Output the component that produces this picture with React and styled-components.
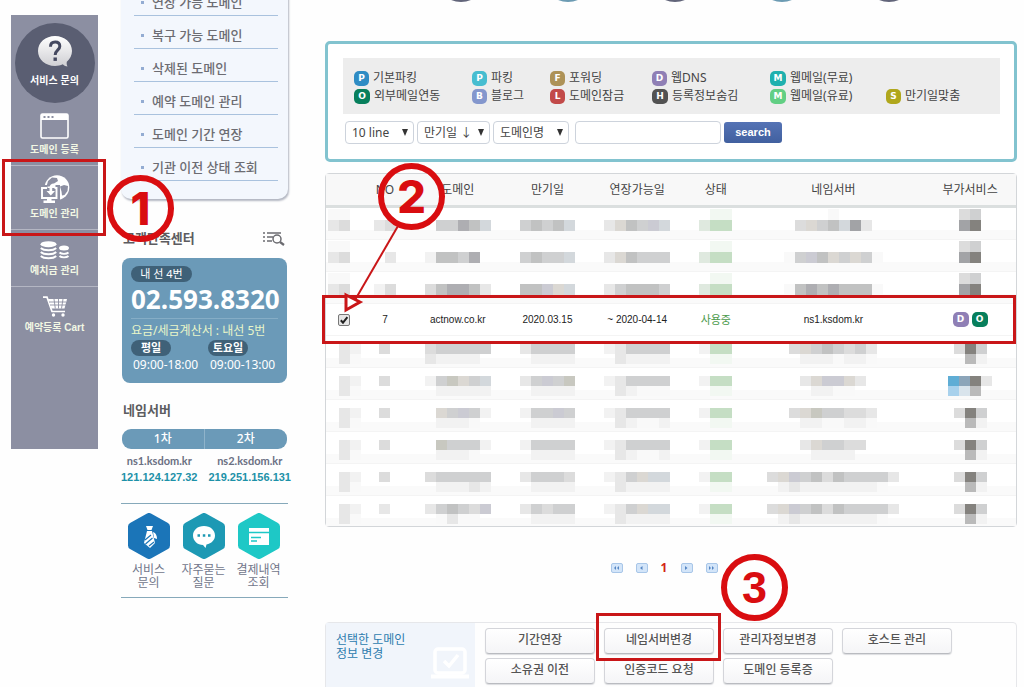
import React from "react";
import styled, { createGlobalStyle, css } from "styled-components";

const KR = `"Noto Sans", "Noto Sans CJK KR", sans-serif`;
const RED = "#d90d10";
const BLUE = "#6b9ab8";

const GlobalStyle = createGlobalStyle`
  *, *::before, *::after { box-sizing: border-box; }
  body {
    margin: 0;
    background: #fefefe;
    color: #444;
    font-family: ${KR};
    font-size: 12px;
    line-height: 16px;
  }
  a { color: inherit; text-decoration: none; }
  button, input, select { font: inherit; color: inherit; margin: 0; }
  ul { list-style: none; margin: 0; padding: 0; }
  h2, p, dl, dd { margin: 0; }
`;

const Page = styled.div`
  display: flex;
  align-items: flex-start;
  height: 100vh;
  overflow: hidden;
  padding: 0 7px 0 11px;
`;

/* ---------- quick menu rail ---------- */

const Rail = styled.nav`
  position: relative;
  z-index: 2;
  flex: none;
  width: 87px;
  min-height: 434px;
  margin: 15px 23px 0 0;
  background: #8c8fa2;
  color: #fff;
  font: 700 10px/14px "Liberation Sans", "Noto Sans CJK KR", sans-serif;
  white-space: nowrap;
`;

const RailHelp = styled.a`
  display: flex;
  flex-direction: column;
  align-items: center;
  gap: 7px;
  width: 80px;
  height: 80px;
  margin: 8px auto 0;
  padding-top: 13px;
  border-radius: 50%;
  background: #5a5e72;
`;

const RailItem = styled.a`
  position: relative;
  display: flex;
  flex-direction: column;
  align-items: center;
  gap: 4px;
  padding: ${(p) => p.$pad} 0 8px;
  color: #f2f7e4;
  border-bottom: ${(p) => (p.$last ? "0" : "1px solid #b4b6c3")};
`;

/* ---------- side column ---------- */

const Side = styled.aside`
  flex: none;
  width: 170px;
  margin: -17px 34px 0 0;
`;

const MenuPanel = styled.ul`
  width: 167px;
  padding: 0 10px 18px 13px;
  background: #f3f7fd;
  border-radius: 0 0 10px 10px;
  box-shadow: 1px 2px 2px #b3b7c2;
  font-size: 13px;
  font-weight: 500;
  color: #6c6c72;
  white-space: nowrap;
`;

const MenuItem = styled.li`
  height: 33px;
  border-bottom: 1px solid #a9c2de;
  a {
    display: flex;
    align-items: center;
    gap: 8px;
    height: 32px;
    padding: 6px 0 0 7px;
  }
  a::before {
    content: "";
    width: 3px;
    height: 3px;
    background: #93acd2;
  }
`;

const Heading = styled.h2`
  display: flex;
  justify-content: space-between;
  align-items: center;
  padding: 0 6px 0 2px;
  margin: ${(p) => p.$margin};
  font-size: 13px;
  line-height: 18px;
  color: #5c5c60;
`;

const PhoneCard = styled.section`
  width: 165px;
  height: 125px;
  margin-left: 1px;
  padding: 8px 9px;
  border-radius: 8px;
  background: ${BLUE};
  color: #fff;
  white-space: nowrap;
`;

const Pill = styled.span`
  display: inline-block;
  min-width: ${(p) => p.$w};
  height: 16px;
  border-radius: 8px;
  background: #3f6178;
  text-align: center;
  font-size: 11px;
  line-height: 15px;
  font-weight: ${(p) => (p.$bold ? 700 : 400)};
`;

const PhoneNumber = styled.p`
  margin-bottom: 2px;
  font: 700 26px/34px "Open Sans", sans-serif;
`;

const BillingLine = styled.p`
  border-top: 1px solid #85adc6;
  padding-top: 3px;
  color: #e9f6c8;
  line-height: 18px;
`;

const Hours = styled.div`
  display: grid;
  grid-template-columns: 77px auto;
  div { display: flex; flex-direction: column; align-items: flex-start; }
  time { padding-left: 2px; font-size: 12px; line-height: 18px; font-family: "Noto Sans", sans-serif; }
`;

const NsTable = styled.table`
  display: block;
  text-align: center;
  white-space: nowrap;
  thead, tbody { display: block; }
  thead tr { display: grid; grid-template-columns: 1fr 1fr; width: 165px; margin-left: 1px; }
  tbody tr { display: flex; justify-content: space-between; }
  td { padding: 0; }
`;

const NsHead = styled.th`
  height: 20px;
  padding: 0;
  background: ${BLUE};
  color: #fff;
  font-weight: 500;
  line-height: 20px;
  &:first-child { border-radius: 9px 0 0 9px; border-right: 1px solid #8fb3ca; }
  &:last-child { border-radius: 0 9px 9px 0; }
`;

const NsName = styled.div`
  margin-top: 4px;
  font: 700 11px/16px Lato, sans-serif;
  color: #6b7083;
`;

const NsIp = styled.div`
  font: 700 11px/16px "Liberation Sans", sans-serif;
  color: #1d91a8;
`;

const Shortcuts = styled.ul`
  display: grid;
  grid-template-columns: repeat(3, 55px);
  width: 167px;
  margin-top: 18px;
  padding-top: 9px;
  border-top: 1px solid #86a9ba;
  border-bottom: 1px solid #86a9ba;
  height: 95px;
  text-align: center;
  line-height: 13px;
  color: #71768a;
  a { display: flex; flex-direction: column; align-items: center; gap: 4px; white-space: nowrap; }
`;

/* ---------- main column ---------- */

const Main = styled.main`
  flex: 1;
  min-width: 0;
`;

const StepDots = styled.div`
  display: flex;
  justify-content: center;
  gap: 55px;
  height: 41px;
  padding-left: 7px;
`;

const StepDot = styled.span`
  width: 52px;
  height: 52px;
  margin-top: -50px;
  border-radius: 50%;
  background: ${(p) => (p.$alt ? "#6c9bb3" : "#62657a")};
`;

const SearchPanel = styled.form`
  border: 3px solid #82c3cf;
  border-radius: 5px;
  padding: 14px 14px 15px 15px;
  background: #fff;
`;

const Legend = styled.ul`
  display: grid;
  grid-template-columns: 118fr 78fr 102fr 118fr 116fr 114fr;
  grid-auto-rows: 18px;
  padding: 11px 0 9px 11px;
  background: #ededed;
  white-space: nowrap;
  li { display: flex; align-items: center; gap: 4px; }
`;

const Badge = styled.span`
  display: inline-flex;
  align-items: center;
  justify-content: center;
  flex: none;
  width: ${(p) => (p.$wide ? "16px" : "15px")};
  height: 15px;
  border-radius: 5px;
  background: ${(p) => p.$c};
  color: #fff;
  font: 700 9px/15px "DejaVu Sans", sans-serif;
`;

const Filters = styled.div`
  display: flex;
  align-items: center;
  gap: 3px;
  padding: 7px 0 0 2px;
`;

const fieldBox = css`
  height: 23px;
  border: 1px solid #cdd3dc;
  border-radius: 4px;
  background: #fff;
`;

const SelectWrap = styled.label`
  position: relative;
  width: ${(p) => p.$w};
  select {
    ${fieldBox}
    display: block;
    width: 100%;
    padding: 0 0 0 6px;
    appearance: none;
  }
  svg { position: absolute; right: 6px; top: 8px; pointer-events: none; }
`;

const Keyword = styled.input`
  ${fieldBox}
  width: 146px;
  margin-left: 3px;
`;

const SearchButton = styled.button`
  width: 58px;
  height: 21px;
  padding: 0 0 2px;
  border: 0;
  border-radius: 3px;
  background: linear-gradient(#5573b5, #41609f);
  color: #fff;
  font: 700 11px/18px "Liberation Sans", sans-serif;
`;

const ListWrap = styled.div`
  position: relative;
  margin-top: 11px;
  border: 1px solid #d3d6d9;
  border-radius: 4px;
  background: #fff;
`;

const DomainTable = styled.table`
  width: 100%;
  table-layout: fixed;
  border-collapse: separate;
  border-spacing: 0;
  text-align: center;
  th {
    height: 34px;
    padding: 0;
    font-weight: 400;
    background: #f8f8f8;
    border-bottom: 3px solid #dbdfdf;
  }
  td { height: 32px; padding: 0; border-bottom: 1px solid #f4f4f4; }
  tr:last-child td { height: 30px; border-bottom: 0; }
`;

const PlainCell = styled.td`
  font-family: "Liberation Sans", "Noto Sans CJK KR", sans-serif;
  font-size: ${(p) => (p.$status ? "11px" : "10px")};
  color: ${(p) => (p.$status ? "#4c9a4c" : "#222")};
  vertical-align: middle;
`;

const Services = styled.span`
  display: flex;
  justify-content: center;
  gap: 3px;
`;

const Checkbox = styled.input`
  appearance: none;
  display: block;
  width: 12px;
  height: 12px;
  margin: 1px auto 0 12px;
  border: 1px solid #777;
  border-radius: 2px;
  background: linear-gradient(#f4f4f4, #dcdcdc);
  &:checked {
    background: url("data:image/svg+xml,%3Csvg xmlns='http://www.w3.org/2000/svg' viewBox='0 0 10 10'%3E%3Cpath d='M1.8 5.2 4 7.6 8.4 2.2' fill='none' stroke='%23222' stroke-width='2'/%3E%3C/svg%3E") center / 10px 10px no-repeat, #e6e6e6;
  }
`;

const MosaicCell = styled.td`
  vertical-align: top;
  background: linear-gradient(#fff 0 72%, #fafafa 72%);
`;

const Mosaic = styled.div`
  display: flex;
  flex-direction: column;
  align-items: center;
  padding-top: ${(p) => (p.$low ? "1px" : "8px")};
`;

const MosaicLine = styled.div`
  display: flex;
`;

const Tile = styled.i`
  width: 11px;
  height: ${(p) => p.$h};
  background: ${(p) => p.$c};
`;

const Pager = styled.nav`
  display: flex;
  align-items: center;
  justify-content: center;
  gap: 13px;
  height: 20px;
  margin: 31px 14px 0 0;
  strong { width: 7px; color: #d32316; text-align: center; }
`;

const PageLink = styled.a`
  display: flex;
  align-items: center;
  justify-content: center;
  width: 12px;
  height: 10px;
  border: 1px solid #a8c6e8;
  border-radius: 2px;
  background: #d3e5f9;
`;

const ActionPanel = styled.section`
  position: relative;
  display: flex;
  margin-top: 44px;
  border: 1px solid #e6e7ea;
  border-radius: 4px;
`;

const ActionTitle = styled.div`
  display: flex;
  justify-content: space-between;
  width: 149px;
  padding: 10px 6px 8px 10px;
  background: #f1f5fb;
  color: #2d7cae;
  line-height: 14px;
  white-space: nowrap;
  svg { margin: 14px 0 0; }
`;

const ActionGrid = styled.div`
  display: grid;
  grid-template-columns: repeat(4, 110px);
  grid-auto-rows: 26px;
  gap: 4px 9px;
  padding: 5px 10px 8px;
`;

const ActionButton = styled.button`
  padding: 0 0 2px;
  border: 1px solid #d4d5da;
  border-bottom-color: #b9bbc0;
  border-radius: 4px;
  background: linear-gradient(#fff, #f5f5f7);
  box-shadow: 0 1px 1px #dcdde0;
  color: #555;
  font-weight: 500;
  white-space: nowrap;
`;

/* ---------- tutorial marks laid over the page ---------- */

const MarkBox = styled.div`
  position: absolute;
  z-index: 3;
  inset: ${(p) => p.$inset};
  width: ${(p) => p.$w || "auto"};
  height: ${(p) => p.$h || "auto"};
  border: 3px solid #c91618;
  pointer-events: none;
`;

const Ring = styled.div`
  position: absolute;
  z-index: 4;
  left: ${(p) => p.$x};
  top: ${(p) => p.$y};
  display: flex;
  align-items: center;
  justify-content: center;
  width: 67px;
  height: 67px;
  border: 6px solid ${RED};
  border-radius: 50%;
  color: ${RED};
  font: 800 45px/55px ${(p) => p.$font || "Inter"}, sans-serif;
  pointer-events: none;
`;

const Arrow = styled.svg`
  position: absolute;
  z-index: 4;
  left: 15px;
  top: 52px;
  pointer-events: none;
`;

/* ---------- icons ---------- */

const QuestionIcon = () => (
  <svg width="34" height="31" viewBox="0 0 34 31" aria-hidden="true">
    <defs>
      <linearGradient id="bubble" x1="0" y1="0" x2="0" y2="1">
        <stop offset="0" stopColor="#fff" />
        <stop offset="1" stopColor="#cfcfd3" />
      </linearGradient>
    </defs>
    <path d="M17 0C7.500 0 0 6.500 0 15s7.500 15 17 15c3 0 5.500-.6 7.800-1.700 1.500 1.500 3 2.200 4.700 2.200-.8-1.500-1-3-.7-4.700C32 23 34 19.300 34 15 34 6.500 26.500 0 17 0z" fill="url(#bubble)" />
    <path d="M12.500 10.800c0-3.200 2-4.800 4.700-4.800 2.800 0 4.600 1.700 4.600 4.300 0 4-4.600 3.900-4.600 8.700" fill="none" stroke="#454960" strokeWidth="3" />
    <rect x="15.500" y="21.500" width="3.400" height="3.400" fill="#454960" />
  </svg>
);

const WindowIcon = () => (
  <svg width="29" height="26" viewBox="0 0 29 26" aria-hidden="true">
    <rect x="1" y="1" width="27" height="24" rx="1.500" fill="none" stroke="#fff" strokeWidth="1.600" />
    <path d="M1 1h27v6H1z" fill="#fff" />
    <path d="M3.500 4h2M7.500 4h2M11.500 4h2" stroke="#8c8fa2" strokeWidth="2" />
  </svg>
);

const GlobeIcon = () => (
  <svg width="30" height="28" viewBox="0 0 30 28" aria-hidden="true">
    <circle cx="17" cy="12.500" r="12.300" fill="#fff" />
    <path d="M8 6l4-3.500 5 .5 1 3-4 2.500-2 3H6.500z" fill="#8c8fa2" />
    <path d="M20 11.500l4-1.500 4 1-.5 5-3 4-2.500.5-.5-4z" fill="#8c8fa2" />
    <path d="M7.500 12H1v11.500h17V12h-2.500" fill="none" stroke="#8c8fa2" strokeWidth="4" />
    <path d="M2 13h14.500v10H2z" fill="#8c8fa2" />
    <path d="M7 13H2v10h14.500V13h-2" fill="none" stroke="#fff" strokeWidth="1.900" />
    <path d="M14 8.500c-3 0-4.500 1.500-4.500 4.500v3H6.500l4.300 4.500 4.200-4.500h-2.800v-3c0-1.500.5-2 1.800-2.500z" fill="#fff" />
    <path d="M7 23h4.500v2.500h3.500V28H3.500v-2.500H7z" fill="#fff" />
  </svg>
);

const CoinsIcon = () => (
  <svg width="30" height="19" viewBox="0 0 30 19" aria-hidden="true">
    <ellipse cx="8.500" cy="3.200" rx="8" ry="3" fill="#fff" />
    <ellipse cx="24" cy="7" rx="5" ry="2.500" fill="#fff" />
    <path d="M.8 7c3 3 12.400 3 15.400 0M.8 11c3 3 12.400 3 15.400 0M.8 15c3 3 12.400 3 15.400 0M19.500 11.500c2 1.800 7 1.800 9 0M19.500 15c2 1.800 7 1.800 9 0" fill="none" stroke="#fff" strokeWidth="1.900" />
  </svg>
);

const CartIcon = () => (
  <svg width="24" height="21" viewBox="0 0 24 21" aria-hidden="true">
    <path d="M0 1.200h4l5 14.300h13" fill="none" stroke="#fff" strokeWidth="1.700" />
    <path d="M5 3h19l-2.500 9.500H8.500z" fill="#fff" />
    <path d="M6 6h17M7 9h16M11 3l1.300 9.500M15.500 3v9.500M20 3l-1.500 9.500" stroke="#8c8fa2" strokeWidth=".9" />
    <circle cx="10.500" cy="19" r="1.700" fill="#fff" />
    <circle cx="20" cy="19" r="1.700" fill="#fff" />
  </svg>
);

const ListSearchIcon = () => (
  <svg width="22" height="15" viewBox="0 0 22 15" fill="none" stroke="#6b6b70" strokeWidth="1.500" aria-hidden="true">
    <path d="M0 2h2M4 2h14M0 6h2M4 6h6M0 10h2M4 10h5" />
    <circle cx="14" cy="8" r="4" />
    <path d="M17 11l4 3" strokeWidth="2.200" />
  </svg>
);

const Hexagon = ({ color, children }) => (
  <svg width="42" height="46" viewBox="0 0 42 46" aria-hidden="true">
    <path d="M21 4 38 13.500v19L21 42 4 32.500v-19z" fill={color} stroke={color} strokeWidth="8" strokeLinejoin="round" />
    {children}
  </svg>
);

const Caret = () => (
  <svg width="6" height="7" viewBox="0 0 6 7" aria-hidden="true">
    <path d="M0 0h6L3 7z" fill="#333" />
  </svg>
);

const LaptopCheckIcon = () => (
  <svg width="38" height="32" viewBox="0 0 38 32" fill="none" stroke="#fff" aria-hidden="true">
    <rect x="4" y="2" width="30" height="24" rx="3" strokeWidth="3.500" />
    <path d="M13 14l5 5 9-11" strokeWidth="3.500" />
    <path d="M0 29.500h38" strokeWidth="4" />
  </svg>
);

const chevrons = {
  first: "M4 0 2 2l2 2zM7 0 5 2l2 2z",
  prev: "M5.500 0 3 2l2.500 2z",
  next: "M3 0l2.500 2L3 4z",
  last: "M2 0l2 2-2 2zM5 0l2 2-2 2z",
};

const PageArrow = ({ kind, label }) => (
  <PageLink href="#" aria-label={label}>
    <svg width="9" height="4" viewBox="0 0 9 4" aria-hidden="true">
      <path d={chevrons[kind]} fill="#5586c4" />
    </svg>
  </PageLink>
);

/* ---------- data ---------- */

const menu = ["연장 가능 도메인", "복구 가능 도메인", "삭제된 도메인", "예약 도메인 관리", "도메인 기간 연장", "기관 이전 상태 조회"];

const legend = [
  ["P", "#2f8cc4", "기본파킹"],
  ["P", "#46bdd0", "파킹"],
  ["F", "#ad9257", "포워딩"],
  ["D", "#8f7fb5", "웹DNS"],
  ["M", "#1fb0ae", "웹메일(무료)", true],
  null,
  ["O", "#077f5c", "외부메일연동", true],
  ["B", "#8497cd", "블로그"],
  ["L", "#c24a49", "도메인잠금"],
  ["H", "#525252", "등록정보숨김", true],
  ["M", "#62cf84", "웹메일(유료)", true],
  ["S", "#b0a71c", "만기일맞춤"],
];

const columns = [
  ["", "5.5%"], ["NO", "6.1%"], ["도메인", "15%"], ["만기일", "11%"],
  ["연장가능일", "15%"], ["상태", "7.8%"], ["네임서버", "26.3%"], ["부가서비스", "13.3%"],
];

const tones = {
  ".": "transparent", 0: "#f9f9f9", 1: "#f2f2f2", 2: "#e7e7e7", 3: "#dcdcdc", 4: "#cfd0d1", 5: "#c1c2c2", 6: "#aeaeb2",
  w: "#dbd8d3", s: "#d3d8dc", v: "#cbcbd3", o: "#c8c8c0",
  f: "#f2f8f2", h: "#dfe9df", g: "#c5dec4",
  k: "#a2a3a6", d: "#84827e", m: "#bababa", b: "#5fadd5", c: "#a8d1ec", n: "#8ca5b9", q: "#d9e4ec",
};

/* Each masked cell lists its tile lines, separated by a slash. */
const maskedTop = [
  ["00./23.", "../23", "....../.4465s", "...../4545s", "....../2w54vs", ".ff/hgg", "...0.../3w45sk2", "34/kd"],
  ["00./23.", "../.2", "....../15546.", "...../4544s", "....../2w5444", ".ff/hgg", "........./04v5w4w40", "34/kd"],
  ["00./23.", "../13", "....../356652", "...../55vws", "....../245554", ".ff/hgg", "........./056565550", "34/kd"],
];

const maskedBottom = [
  [".21/.20", "3/.", "344444/21111.", "24444/.1111", "124444/.21111", "1gg/.ff", "3w454342/.1110110", "3d4/.m1"],
  [".21/.20", "3/.", "14ow4s/.11111", "24v4o/.1111", "124444/.21000", "1gg/.ff", "2wvvw2/.1100.", "bnd2/cqm."],
  [".21/.20", "3/.", ".w4v41/.1110.", "144v4/.1111", "124444/.21001", "1gg/.ff", "3wo44332/.1100110", "3d4/.m1"],
  [".21/.20", "3/.", ".o4441/.1110.", "14444/.1111", "124444/.21001", "1gg/.ff", "2w4433/.1111.", "3d4/.m1"],
  [".21/.20", "3/.", "344444/.11121", "24443/.1111", "124wss/.21111", "1gg/.ff", "3wv453544442/.1211111110.", "3d4/.m1"],
  [".21/.20", "2/.", "24543v/.0200.", "24344/.1111", "124wss/.21111", "1gg/.ff", "3wv453544442/.1211111110.", "3d4/.m1"],
];

const MaskedRow = ({ cells, low }) => (
  <tr>
    {cells.map((cell, i) => (
      <MosaicCell key={i}>
        <Mosaic $low={low}>
          {cell.split("/").map((line, j) => (
            <MosaicLine key={j}>
              {line.split("").map((t, k) => (
                <Tile key={k} $c={tones[t]} $h={low ? "11px" : "10px"} />
              ))}
            </MosaicLine>
          ))}
        </Mosaic>
      </MosaicCell>
    ))}
  </tr>
);

const actions = ["기간연장", "네임서버변경", "관리자정보변경", "호스트 관리", "소유권 이전", "인증코드 요청", "도메인 등록증"];

export default function App() {
  return (
    <>
      <GlobalStyle />
      <Page>
        <Rail>
          <RailHelp href="#"><QuestionIcon />서비스 문의</RailHelp>
          <RailItem href="#" $pad="10px"><WindowIcon />도메인 등록</RailItem>
          <RailItem href="#" $pad="9px">
            <GlobeIcon />도메인 관리
            <MarkBox $inset="-7px -8px -7px -9px" />
          </RailItem>
          <RailItem href="#" $pad="11px"><CoinsIcon />예치금 관리</RailItem>
          <RailItem href="#" $pad="9px" $last><CartIcon />예약등록 Cart</RailItem>
          <Ring $x="96px" $y="160px">1</Ring>
        </Rail>

        <Side>
          <MenuPanel>
            {menu.map((m) => <MenuItem key={m}><a href="#">{m}</a></MenuItem>)}
          </MenuPanel>

          <Heading $margin="30px 0 11px">고객만족센터<ListSearchIcon /></Heading>
          <PhoneCard>
            <Pill $w="61px">내 선 4번</Pill>
            <PhoneNumber>02.593.8320</PhoneNumber>
            <BillingLine>요금/세금계산서 : 내선 5번</BillingLine>
            <Hours>
              <div><Pill $w="40px" $bold>평일</Pill><time>09:00-18:00</time></div>
              <div><Pill $w="40px" $bold>토요일</Pill><time>09:00-13:00</time></div>
            </Hours>
          </PhoneCard>

          <Heading $margin="18px 0 10px">네임서버</Heading>
          <NsTable>
            <thead><tr><NsHead>1차</NsHead><NsHead>2차</NsHead></tr></thead>
            <tbody>
              <tr>
                <td><NsName>ns1.ksdom.kr</NsName><NsIp>121.124.127.32</NsIp></td>
                <td><NsName>ns2.ksdom.kr</NsName><NsIp>219.251.156.131</NsIp></td>
              </tr>
            </tbody>
          </NsTable>

          <Shortcuts>
            <li>
              <a href="#">
                <Hexagon color="#1b75b8">
                  <path d="M18 13h7l-1.500 4h-4z" fill="#fff" />
                  <path d="M19 18h5l3 12-5 5-6-5z" fill="#fff" />
                  <path d="M25 19c3 1 4 4 4 7l-3-1z" fill="#fff" />
                  <path d="M17 27l6-5M17.500 31l7-6M21 33l5-4" stroke="#1b75b8" strokeWidth="1.200" />
                </Hexagon>
                <span>서비스<br />문의</span>
              </a>
            </li>
            <li>
              <a href="#">
                <Hexagon color="#1d99b4">
                  <path d="M21 13c-6.500 0-11 4.200-11 9.500S14.500 32 20 32l2.500 3 1-3.500c5-1 8.500-4.500 8.500-9C32 17.200 27.500 13 21 13z" fill="#fff" />
                  <path d="M14.500 22.500h2.500M19.800 22.500h2.500M25 22.500h2.500" stroke="#1d99b4" strokeWidth="2.500" />
                </Hexagon>
                <span>자주묻는<br />질문</span>
              </a>
            </li>
            <li>
              <a href="#">
                <Hexagon color="#1ec8c6">
                  <path d="M11 15h20v17H11z" fill="#fff" />
                  <path d="M11 19.500h20M13 24.500h10M13 28h6" stroke="#1ec8c6" strokeWidth="1.500" />
                </Hexagon>
                <span>결제내역<br />조회</span>
              </a>
            </li>
          </Shortcuts>
        </Side>

        <Main>
          <StepDots>
            <StepDot /><StepDot $alt /><StepDot /><StepDot $alt /><StepDot />
          </StepDots>

          <SearchPanel onSubmit={(e) => e.preventDefault()}>
            <Legend>
              {legend.map((l, i) =>
                l ? <li key={i}><Badge $c={l[1]} $wide={l[3]}>{l[0]}</Badge>{l[2]}</li> : <li key={i} />
              )}
            </Legend>
            <Filters>
              <SelectWrap $w="69px"><select aria-label="줄 수"><option>10 line</option></select><Caret /></SelectWrap>
              <SelectWrap $w="73px"><select aria-label="정렬"><option>만기일 ↓</option></select><Caret /></SelectWrap>
              <SelectWrap $w="76px"><select aria-label="검색 항목"><option>도메인명</option></select><Caret /></SelectWrap>
              <Keyword type="text" aria-label="검색어" />
              <SearchButton type="submit">search</SearchButton>
            </Filters>
          </SearchPanel>

          <ListWrap>
            <DomainTable>
              <colgroup>{columns.map(([n, w]) => <col key={n} width={w} />)}</colgroup>
              <thead><tr>{columns.map(([n]) => <th key={n} scope="col">{n}</th>)}</tr></thead>
              <tbody>
                {maskedTop.map((r, i) => <MaskedRow key={i} cells={r} low />)}
                <tr>
                  <PlainCell><Checkbox type="checkbox" defaultChecked aria-label="actnow.co.kr 선택" /></PlainCell>
                  <PlainCell>7</PlainCell>
                  <PlainCell>actnow.co.kr</PlainCell>
                  <PlainCell>2020.03.15</PlainCell>
                  <PlainCell>~ 2020-04-14</PlainCell>
                  <PlainCell $status>사용중</PlainCell>
                  <PlainCell>ns1.ksdom.kr</PlainCell>
                  <PlainCell><Services><Badge $c="#8f7fb5" $wide>D</Badge><Badge $c="#077f5c" $wide>O</Badge></Services></PlainCell>
                </tr>
                {maskedBottom.map((r, i) => <MaskedRow key={i} cells={r} />)}
              </tbody>
            </DomainTable>
            <MarkBox $inset="121px 0 182px -4px" />
            <Ring $x="52px" $y="-11px">2</Ring>
            <Arrow width="65" height="100" viewBox="0 0 65 100" fill="none" stroke="#c91618" strokeWidth="2" aria-hidden="true">
              <path d="M57 0 14 74" />
              <path d="M5 69l14 7-14 8z" strokeWidth="3" fill="#fff" />
            </Arrow>
          </ListWrap>

          <Pager aria-label="페이지">
            <PageArrow kind="first" label="처음" />
            <PageArrow kind="prev" label="이전" />
            <strong>1</strong>
            <PageArrow kind="next" label="다음" />
            <PageArrow kind="last" label="마지막" />
          </Pager>

          <ActionPanel>
            <ActionTitle><p>선택한 도메인<br />정보 변경</p><LaptopCheckIcon /></ActionTitle>
            <ActionGrid>
              {actions.map((a) => <ActionButton key={a} type="button">{a}</ActionButton>)}
            </ActionGrid>
            <MarkBox $inset="-10px auto auto 270px" $w="125px" $h="48px" />
            <Ring $x="395px" $y="-69px" $font="'Liberation Sans'">3</Ring>
          </ActionPanel>
        </Main>
      </Page>
    </>
  );
}
